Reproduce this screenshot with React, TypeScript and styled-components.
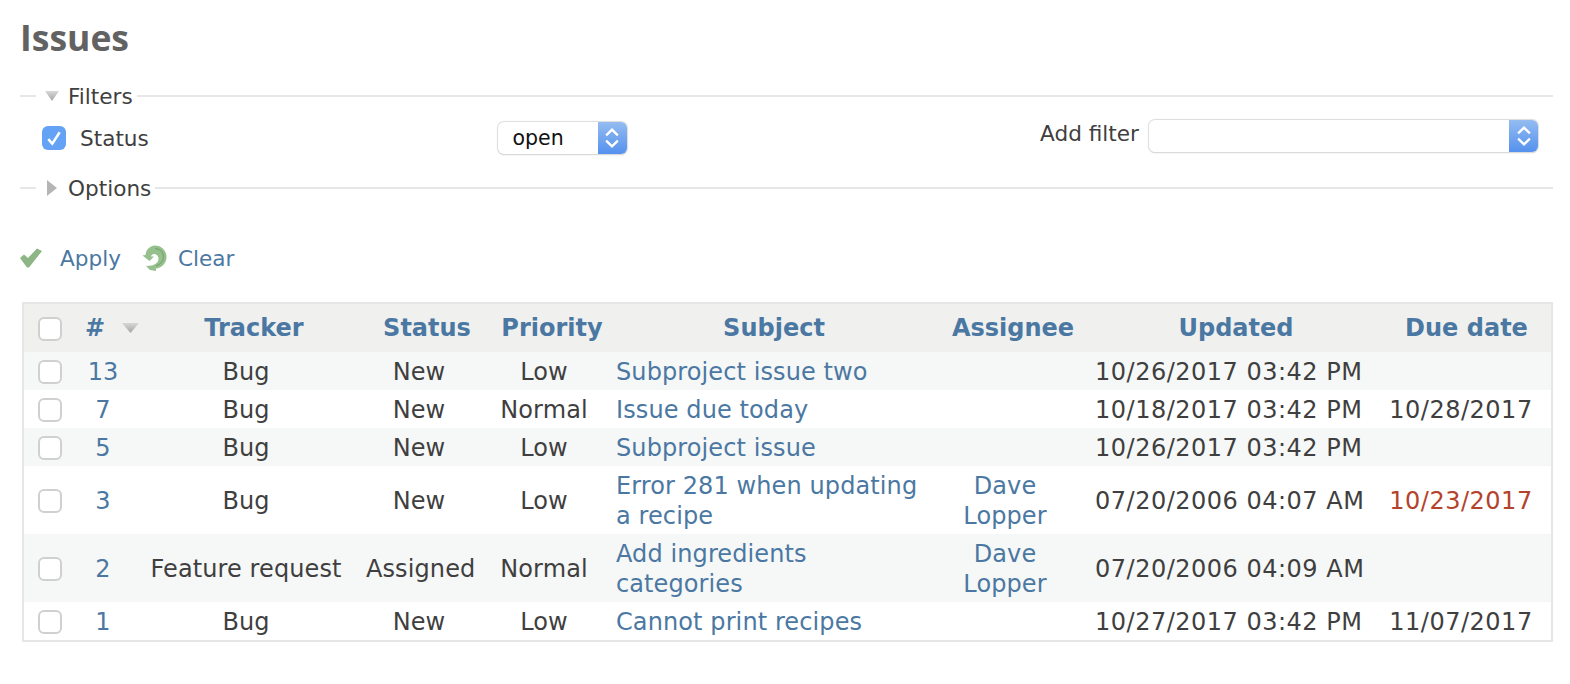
import React from "react";
import styled, { createGlobalStyle } from "styled-components";

const GlobalStyle = createGlobalStyle`
  html, body {
    margin: 0;
    padding: 0;
    background: #fff;
    font-family: "DejaVu Sans", Verdana, sans-serif;
    font-size: 21.6px;
    color: #3f3f3f;
  }
`;

const Page = styled.div`
  padding: 13px 17px 0 20px;
`;

const Title = styled.h2`
  margin: 0 0 20px;
  font-family: "Open Sans", sans-serif;
  font-size: 35.5px;
  line-height: 48px;
  font-weight: 700;
  color: #626262;
`;

const LegendRow = styled.div`
  display: flex;
  align-items: center;
  height: 30px;
  &::before {
    content: "";
    width: 16px;
    height: 2px;
    background: #e7e7e7;
  }
  &::after {
    content: "";
    flex: 1;
    height: 2px;
    background: #e7e7e7;
  }
`;

const LegendIcon = styled.span`
  width: 32px;
  display: flex;
  justify-content: center;
`;

const LegendText = styled.span`
  padding-right: 4px;
`;

const FilterRow = styled.div`
  display: flex;
  align-items: flex-start;
  height: 62px;
  padding: 10px 15px 0 22px;
  margin-bottom: -10px;
`;

const StatusLabel = styled.label`
  display: flex;
  align-items: center;
  gap: 14px;
  width: 455.5px;
  height: 34px;
`;

const CheckedBox = styled.span`
  width: 24px;
  height: 24px;
  border-radius: 6px;
  background: #64a2f5;
  display: flex;
  align-items: center;
  justify-content: center;
`;

const SelectBox = styled.div<{ $width: number }>`
  width: ${(p) => p.$width}px;
  height: 32px;
  margin-top: 1px;
  box-sizing: border-box;
  display: flex;
  align-items: center;
  justify-content: space-between;
  background: #fff;
  border-radius: 6px;
  box-shadow: 0 0 1px 1px #dcdcdc, 0 1px 1px #c4c4c4;
  overflow: hidden;
  color: #111;
  font-size: 20.5px;
  padding-left: 15px;
`;

const SelectArrow = styled.span`
  width: 29px;
  height: 100%;
  display: flex;
  align-items: center;
  justify-content: center;
  background: linear-gradient(#94bcf0, #5591ee);
`;

const AddFilter = styled.div`
  margin-left: auto;
  display: flex;
  gap: 10px;
  margin-top: -2px;
  line-height: 30px;
`;

const Actions = styled.div`
  display: flex;
  align-items: center;
  margin-top: 40px;
  height: 30px;
`;

const ActionLink = styled.a<{ $gap: number }>`
  color: #4b78a2;
  margin-left: ${(p) => p.$gap}px;
  margin-right: 21px;
`;

const Table = styled.table`
  width: 1531px;
  margin: 29px 0 0 2px;
  border: 2px solid #e6e6e6;
  border-collapse: separate;
  border-spacing: 0;
  table-layout: fixed;
  font-size: 24px;
`;

const Th = styled.th`
  height: 48px;
  padding: 0 0 0 16px;
  background: #f0f0ef;
  color: #4b78a2;
  font-weight: 700;
  text-align: center;
  &:first-child {
    padding: 0 0 0 14px;
    text-align: left;
  }
`;

const SortWrap = styled.span`
  display: inline-flex;
  align-items: center;
  gap: 17px;
  margin-left: -7px;
`;

const Row = styled.tr<{ $odd: boolean }>`
  background: ${(p) => (p.$odd ? "#f6f7f7" : "#fff")};
`;

const Td = styled.td`
  padding: 5px 4px 3px;
  line-height: 30px;
  text-align: center;
  white-space: nowrap;
  letter-spacing: 0.1px;
  &:first-child {
    padding: 0 0 0 14px;
    text-align: left;
  }
`;

const SubjectCell = styled(Td)`
  padding-right: 0;
  text-align: left;
  white-space: normal;
`;

const AssigneeCell = styled(Td)`
  padding-left: 20px;
  padding-right: 20px;
  white-space: normal;
`;

const UpdatedCell = styled(Td)`
  padding-left: 5px;
  letter-spacing: 0.5px;
`;

const DueCell = styled(Td)<{ $overdue?: boolean }>`
  padding-left: 9px;
  letter-spacing: 0.5px;
  color: ${(p) => (p.$overdue ? "#b4432e" : "inherit")};
`;

const IssueLink = styled.a`
  color: #4b78a2;
`;

const Check = styled.input.attrs({ type: "checkbox" })`
  appearance: none;
  display: block;
  margin: 2px 0 0;
  width: 24px;
  height: 24px;
  box-sizing: border-box;
  background: #fff;
  border: 2px solid #d0d0d0;
  border-radius: 6px;
`;

const DownTriangle = ({ width = 14 }: { width?: number }) => (
  <svg width={width} height={10} viewBox="0 0 14 10" preserveAspectRatio="none">
    <defs>
      <linearGradient id="tri" x1="0" y1="0" x2="0" y2="1">
        <stop offset="0" stopColor="#d8d8d8" />
        <stop offset="1" stopColor="#a4a4a4" />
      </linearGradient>
    </defs>
    <path d="M0 0H14L7 10Z" fill="url(#tri)" />
  </svg>
);

const RightTriangle = () => (
  <svg width={10} height={16} viewBox="0 0 10 16">
    <path d="M0 0L10 8L0 16Z" fill="#b5b5b5" />
  </svg>
);

const Chevrons = () => (
  <svg width={16} height={26} viewBox="0 0 12 20" fill="none" stroke="#fff" strokeWidth="1.8">
    <path d="M1.5 8L6 3.5L10.5 8" />
    <path d="M1.5 12L6 16.5L10.5 12" />
  </svg>
);

const ApplyIcon = () => (
  <svg width={22} height={20} viewBox="0 0 22 20">
    <path d="M0 10L4 6.5L8 10L17 0.5L22 3L9 19.5H7Z" fill="#8db585" />
  </svg>
);

const ClearIcon = () => (
  <svg width={25} height={26} viewBox="0 0 25 26">
    <path
      d="M12 0.5C19 0 24.5 5 24.5 12C24.5 19 19 23 14 23.5L14 26L8 25L4 21C9 21 13 20 15.5 17C17 15 17 11 14 9.5C11.5 8.5 9.5 9.5 9 11.5L12 11.5L7.5 16L0.5 10.5L3.5 10C4 5 7 1.5 12 0.5Z"
      fill="#96c08d"
    />
    <path d="M13 3.5C18 3.5 21.5 7 21.5 12C21.5 16 18 20 14 21" fill="none" stroke="#7aa973" strokeWidth="1.4" />
  </svg>
);

const columns = [52, 54, 232, 114, 136, 308, 170, 276, 185];

const issues = [
  { id: 13, tracker: "Bug", status: "New", priority: "Low", subject: "Subproject issue two", assignee: "", updated: "10/26/2017 03:42 PM", due: "" },
  { id: 7, tracker: "Bug", status: "New", priority: "Normal", subject: "Issue due today", assignee: "", updated: "10/18/2017 03:42 PM", due: "10/28/2017" },
  { id: 5, tracker: "Bug", status: "New", priority: "Low", subject: "Subproject issue", assignee: "", updated: "10/26/2017 03:42 PM", due: "" },
  { id: 3, tracker: "Bug", status: "New", priority: "Low", subject: "Error 281 when updating a recipe", assignee: "Dave Lopper", updated: "07/20/2006 04:07 AM", due: "10/23/2017", overdue: true },
  { id: 2, tracker: "Feature request", status: "Assigned", priority: "Normal", subject: "Add ingredients categories", assignee: "Dave Lopper", updated: "07/20/2006 04:09 AM", due: "" },
  { id: 1, tracker: "Bug", status: "New", priority: "Low", subject: "Cannot print recipes", assignee: "", updated: "10/27/2017 03:42 PM", due: "11/07/2017" },
];

export default function App() {
  return (
    <Page>
      <GlobalStyle />
      <Title>Issues</Title>
      <LegendRow>
        <LegendIcon>
          <DownTriangle />
        </LegendIcon>
        <LegendText>Filters</LegendText>
      </LegendRow>
      <FilterRow>
        <StatusLabel>
          <CheckedBox>
            <svg width={16} height={16} viewBox="0 0 14 14" fill="none" stroke="#fff" strokeWidth="2.2">
              <path d="M2 8L5.5 12L12 2" />
            </svg>
          </CheckedBox>
          Status
        </StatusLabel>
        <SelectBox $width={129}>
          open
          <SelectArrow>
            <Chevrons />
          </SelectArrow>
        </SelectBox>
        <AddFilter>
          Add filter
          <SelectBox $width={389}>
            <span />
            <SelectArrow>
              <Chevrons />
            </SelectArrow>
          </SelectBox>
        </AddFilter>
      </FilterRow>
      <LegendRow>
        <LegendIcon>
          <RightTriangle />
        </LegendIcon>
        <LegendText>Options</LegendText>
      </LegendRow>
      <Actions>
        <ApplyIcon />
        <ActionLink $gap={18}>Apply</ActionLink>
        <ClearIcon />
        <ActionLink $gap={11}>Clear</ActionLink>
      </Actions>
      <Table>
        <colgroup>
          {columns.map((w, i) => (
            <col key={i} style={{ width: w }} />
          ))}
        </colgroup>
        <thead>
          <tr>
            <Th>
              <Check />
            </Th>
            <Th>
              <SortWrap>
                #
                <DownTriangle width={17} />
              </SortWrap>
            </Th>
            <Th>Tracker</Th>
            <Th>Status</Th>
            <Th>Priority</Th>
            <Th>Subject</Th>
            <Th>Assignee</Th>
            <Th>Updated</Th>
            <Th>Due date</Th>
          </tr>
        </thead>
        <tbody>
          {issues.map((issue, i) => (
            <Row key={issue.id} $odd={i % 2 === 0}>
              <Td>
                <Check />
              </Td>
              <Td>
                <IssueLink>{issue.id}</IssueLink>
              </Td>
              <Td>{issue.tracker}</Td>
              <Td>{issue.status}</Td>
              <Td>{issue.priority}</Td>
              <SubjectCell>
                <IssueLink>{issue.subject}</IssueLink>
              </SubjectCell>
              <AssigneeCell>
                <IssueLink>{issue.assignee}</IssueLink>
              </AssigneeCell>
              <UpdatedCell>{issue.updated}</UpdatedCell>
              <DueCell $overdue={issue.overdue}>{issue.due}</DueCell>
            </Row>
          ))}
        </tbody>
      </Table>
    </Page>
  );
}
